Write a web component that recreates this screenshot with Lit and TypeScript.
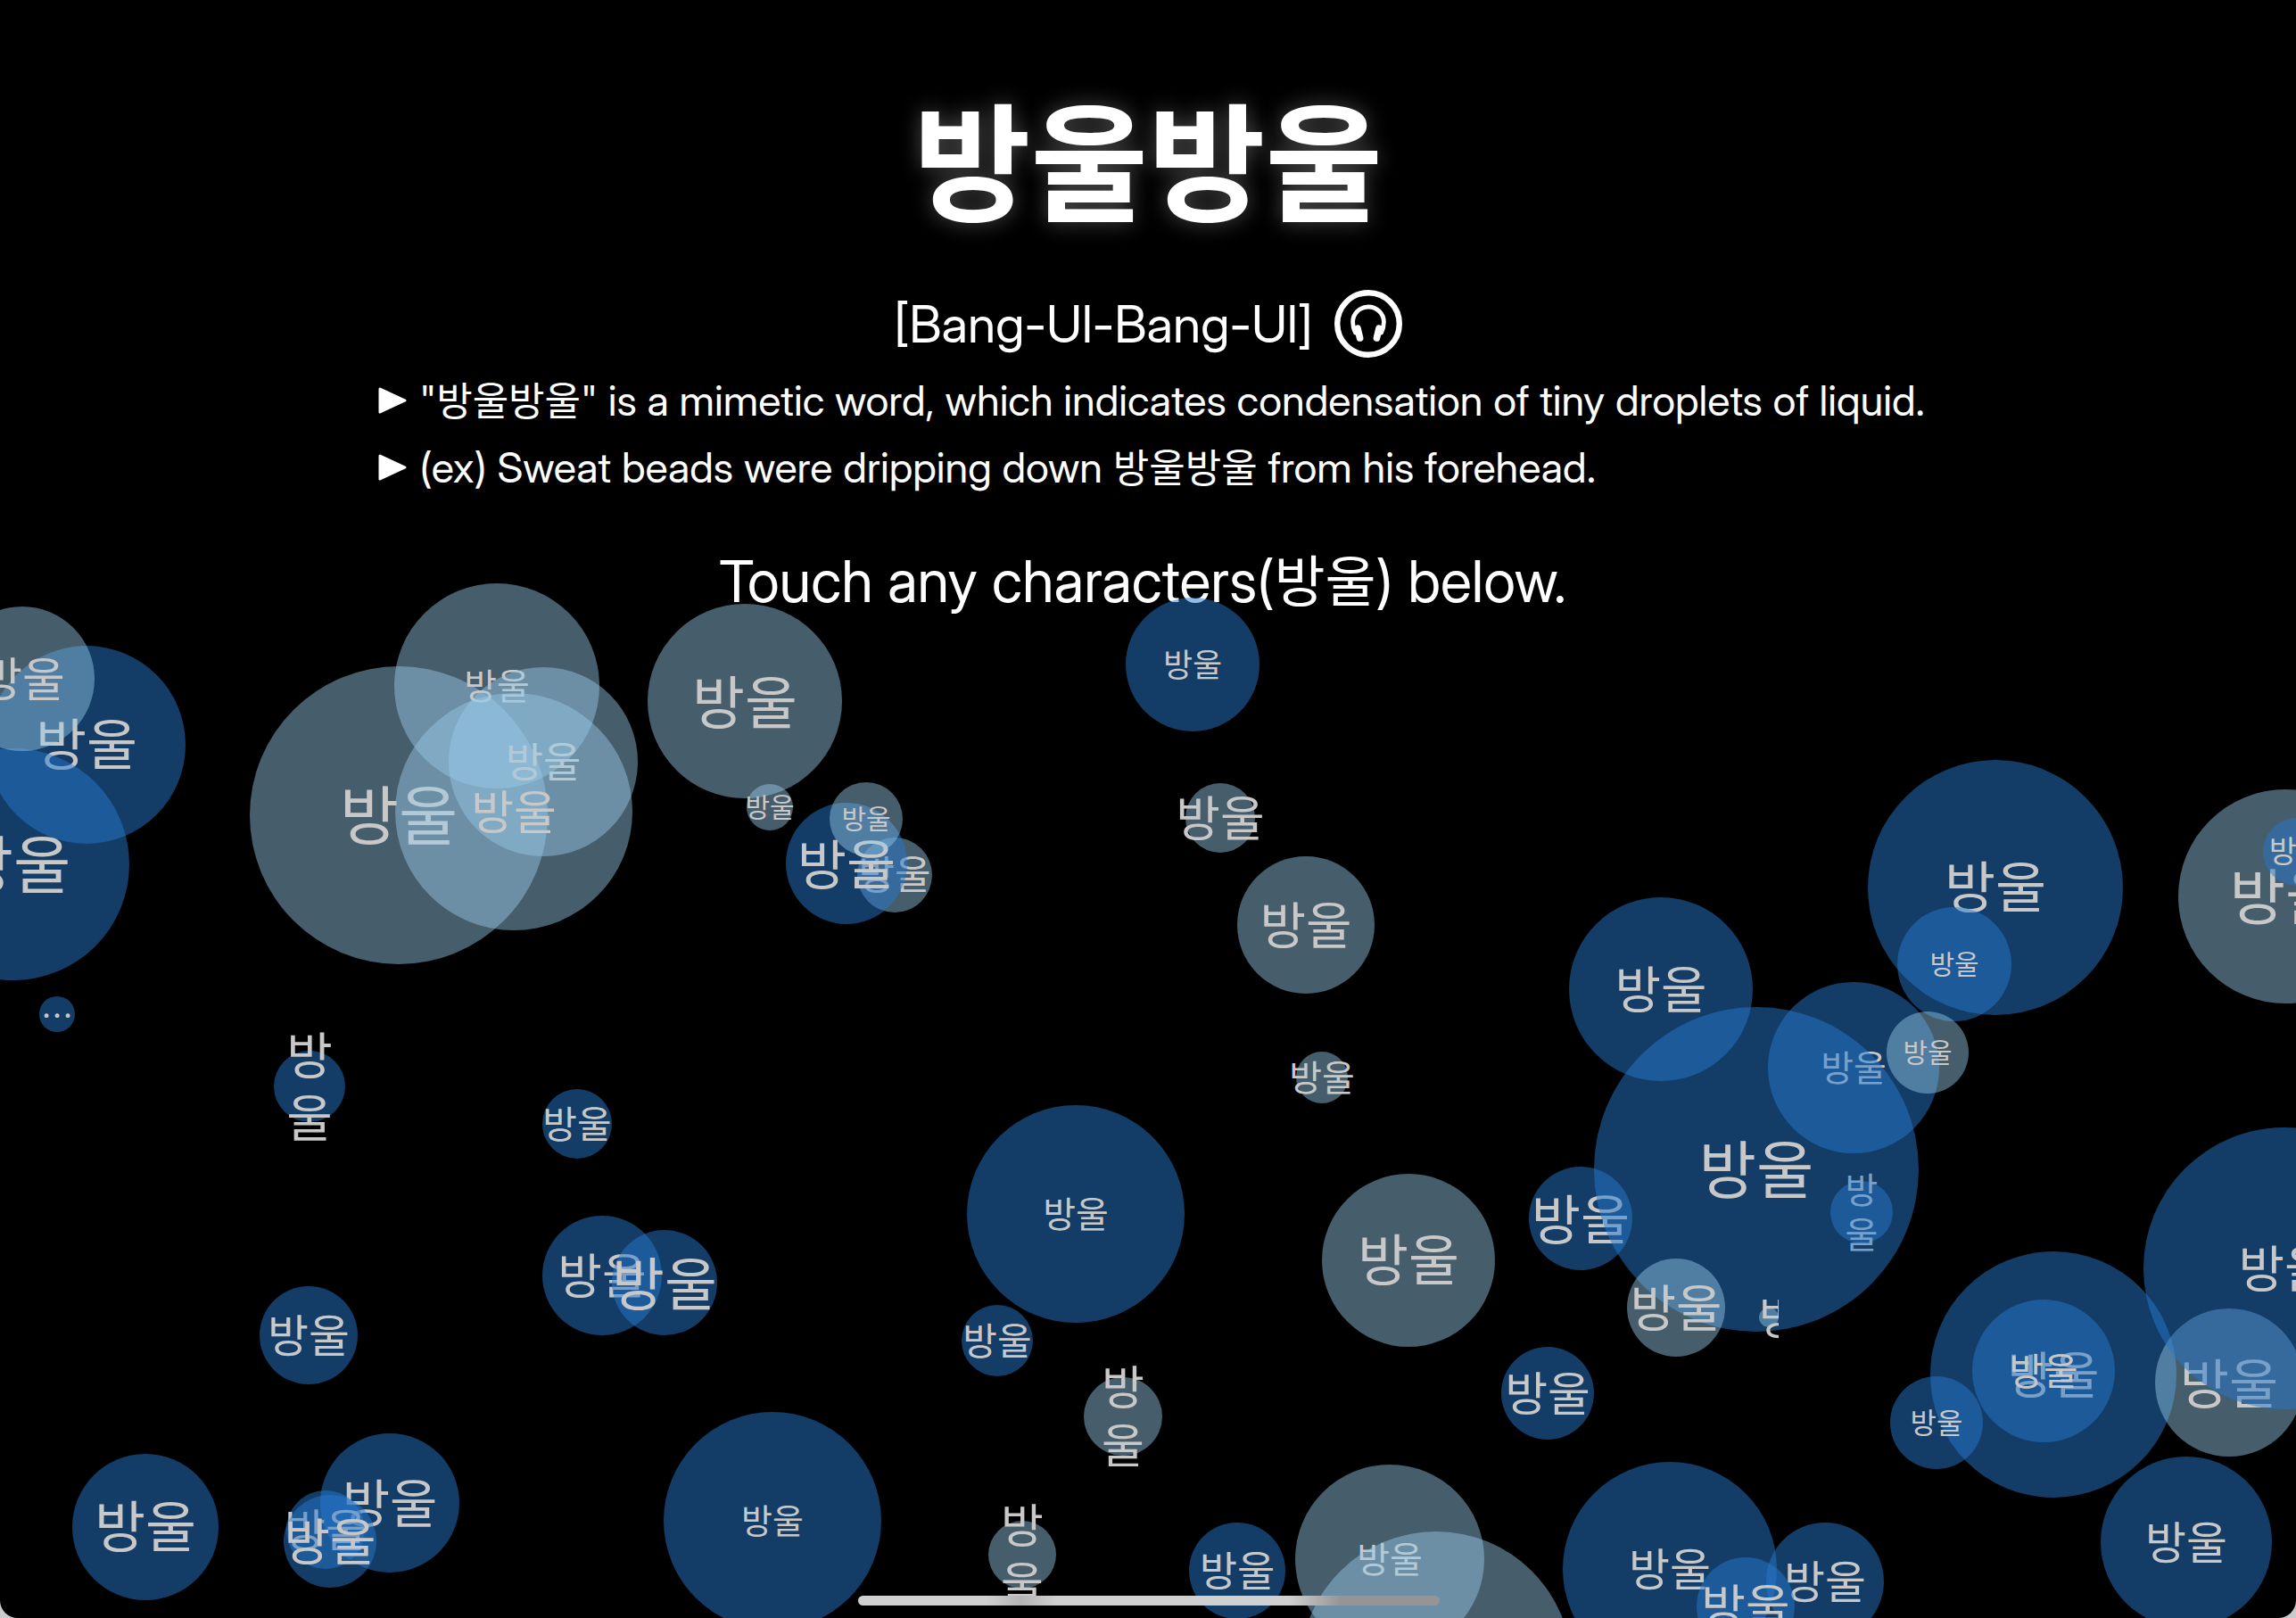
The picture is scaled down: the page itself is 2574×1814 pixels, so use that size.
import { LitElement, css, html } from "lit";
import { customElement, property, state } from "lit/decorators.js";
import { styleMap } from "lit/directives/style-map.js";

type Tone = "deep" | "pale";
type Fit = "line" | "stack" | "clip" | "dots" | "none";

interface Bubble {
  x: number;
  y: number;
  r: number;
  size: number;
  tone: Tone;
  fit: Fit;
}

const deep = (x: number, y: number, r: number, size: number, fit: Fit = "line"): Bubble => ({ x, y, r, size, tone: "deep", fit });
const pale = (x: number, y: number, r: number, size: number, fit: Fit = "line"): Bubble => ({ x, y, r, size, tone: "pale", fit });

// Centre, radius and label size of each droplet, listed from back to front.
const BUBBLES: Bubble[] = [
  deep(97, 835, 111, 62),
  deep(15, 969, 130, 70),
  pale(25, 761, 81, 52),
  pale(447, 914, 167, 72),
  pale(557, 769, 115, 40),
  pale(609, 854, 106, 46),
  pale(576, 910, 133, 52),
  deep(64, 1137, 20, 36, "dots"),
  deep(347, 1218, 40, 56, "stack"),
  deep(647, 1260, 39, 42),
  deep(675, 1430, 67, 54),
  deep(745, 1438, 59, 64),
  deep(346, 1497, 55, 50),
  deep(163, 1712, 82, 62),
  deep(437, 1685, 78, 58),
  deep(365, 1715, 44, 50),
  deep(370, 1728, 52, 56),
  pale(835, 786, 109, 64),
  pale(863, 905, 26, 30),
  pale(1003, 981, 42, 44),
  deep(949, 968, 68, 60),
  pale(971, 918, 41, 30),
  deep(1337, 745, 75, 36),
  pale(1368, 917, 39, 54),
  pale(1464, 1037, 77, 56),
  pale(1482, 1208, 29, 40),
  pale(1579, 1413, 97, 62),
  deep(1772, 1366, 58, 60),
  deep(1862, 1109, 103, 56),
  deep(2078, 1197, 96, 40),
  deep(2087, 1359, 35, 40, "stack"),
  deep(1969, 1311, 182, 70),
  deep(1735, 1562, 52, 52),
  deep(2237, 995, 143, 62),
  deep(2191, 1081, 64, 30),
  pale(2161, 1180, 46, 30),
  pale(2562, 1005, 120, 68),
  deep(2575, 955, 38, 34),
  pale(1879, 1466, 55, 56),
  pale(1983, 1477, 11, 50, "clip"),
  deep(2302, 1541, 138, 56),
  deep(2291, 1537, 80, 42),
  deep(2171, 1595, 52, 32),
  pale(2499, 1550, 83, 60),
  deep(2561, 1422, 158, 56),
  deep(2451, 1729, 96, 50),
  deep(1872, 1759, 120, 50),
  deep(2046, 1773, 66, 50),
  deep(1957, 1801, 55, 54),
  pale(1558, 1748, 106, 40),
  pale(1610, 1869, 152, 40, "none"),
  deep(1387, 1761, 54, 46),
  pale(1146, 1743, 38, 52, "stack"),
  pale(1259, 1588, 44, 52, "stack"),
  deep(1206, 1361, 122, 40),
  deep(1118, 1503, 40, 42),
  deep(866, 1705, 122, 38),
];

@customElement("droplet-bubble")
export class DropletBubble extends LitElement {
  @property({ attribute: false }) bubble!: Bubble;

  static styles = css`
    :host {
      display: block;
    }
    .bubble {
      display: flex;
      align-items: center;
      justify-content: center;
      box-sizing: border-box;
      width: 100%;
      height: 100%;
      padding: 0;
      border: 0;
      border-radius: 50%;
      color: #c8c8c8;
      font-family: "Noto Sans CJK KR", sans-serif;
      font-size: inherit;
      cursor: pointer;
    }
    .deep {
      background: rgba(38, 120, 206, 0.5);
    }
    .pale {
      background: rgba(152, 202, 233, 0.46);
    }
    .label {
      flex: none;
      padding-bottom: 0.1em;
      line-height: 1.25;
      white-space: nowrap;
    }
    .stack {
      width: 1em;
      white-space: normal;
      word-break: break-all;
      text-align: center;
    }
    .clip {
      width: 100%;
      overflow: hidden;
      text-align: left;
    }
    .dots {
      padding-bottom: 0;
    }
  `;

  render() {
    const { tone, fit } = this.bubble;
    const text = fit === "dots" ? "⋯" : fit === "none" ? "" : "방울";
    return html`<button class="bubble ${tone}" type="button" aria-label="방울">
      <span class="label ${fit}">${text}</span>
    </button>`;
  }
}

@customElement("app-root")
export class AppRoot extends LitElement {
  @state() private popped = new Set<number>();

  static styles = css`
    :host {
      display: block;
      background: #c8cacc;
    }
    .screen {
      position: relative;
      box-sizing: border-box;
      min-height: 100vh;
      padding-top: 83px;
      overflow: hidden;
      border-radius: 0 0 20px 20px;
      background: #000;
      color: #fff;
      font-family: "Inter Display", "Inter Tight", Inter, "Noto Sans CJK KR", sans-serif;
    }
    .intro {
      display: flex;
      flex-direction: column;
      align-items: center;
    }
    .title {
      margin: 0 0 58px;
      font-family: "Noto Sans CJK KR", sans-serif;
      font-size: 143px;
      font-weight: 700;
      line-height: 184px;
      text-shadow: 0 0 24px rgba(255, 255, 255, 0.3);
    }
    .reading {
      display: flex;
      align-items: center;
      gap: 24px;
      height: 76px;
      margin-bottom: 10px;
      font-size: 57px;
    }
    .listen {
      display: block;
      width: 76px;
      height: 76px;
      padding: 0;
      border: 0;
      background: none;
      color: inherit;
      cursor: pointer;
    }
    .icon {
      display: block;
      width: 100%;
      height: 100%;
    }
    .notes {
      margin: 0 0 51px;
      padding: 0 0 0 8px;
      list-style: none;
      font-size: 47px;
      line-height: 75px;
    }
    .note {
      display: flex;
      align-items: center;
      gap: 14px;
    }
    .marker {
      flex: none;
      width: 32px;
      height: 30px;
    }
    .ko {
      font-family: "Noto Sans CJK KR", sans-serif;
      font-size: 44px;
      line-height: 1;
    }
    .prompt {
      margin: 0;
      padding-right: 12px;
      font-size: 65px;
      line-height: 80px;
    }
    .prompt .ko {
      font-size: 62px;
    }
    .field {
      position: absolute;
      inset: 0;
    }
    .drop {
      position: absolute;
    }
    .home {
      position: absolute;
      bottom: 14px;
      left: 50%;
      width: 652px;
      height: 11px;
      margin-left: -325px;
      border-radius: 6px;
      background: linear-gradient(90deg, #d0d0d0 0 22%, #b4b4b4 28%, #d0d0d0 34% 74%, #959595 83%);
    }
  `;

  private pop(index: number) {
    this.popped = new Set(this.popped).add(index);
  }

  private speak() {
    const words = new SpeechSynthesisUtterance("방울방울");
    words.lang = "ko-KR";
    window.speechSynthesis?.speak(words);
  }

  private marker() {
    return html`<svg class="marker" viewBox="0 0 32 30" aria-hidden="true">
      <path d="M2 2 L30 15 L2 28 Z" fill="currentColor" stroke="currentColor" stroke-width="3" stroke-linejoin="round" />
    </svg>`;
  }

  render() {
    return html`
      <main class="screen">
        <header class="intro">
          <h1 class="title">방울방울</h1>
          <div class="reading">
            <span>[Bang-Ul-Bang-Ul]</span>
            <button class="listen" type="button" aria-label="Listen" @click=${this.speak}>
              <svg class="icon" viewBox="0 0 76 76" fill="none" stroke="currentColor" stroke-linecap="round">
                <circle cx="38" cy="38" r="34.8" stroke-width="6.4" />
                <path d="M23.4 48 C21.2 43.5 20.6 39.5 20.6 36 A17.4 17 0 0 1 55.4 36 C55.4 39.5 54.8 43.5 52.6 48" stroke-width="4.8" />
                <path d="M26 43.2 L28.6 54" stroke-width="7.6" />
                <path d="M50 43.2 L47.4 54" stroke-width="7.6" />
              </svg>
            </button>
          </div>
          <ul class="notes">
            <li class="note">
              ${this.marker()}
              <span>"<span class="ko">방울방울</span>" is a mimetic word, which indicates condensation of tiny droplets of liquid.</span>
            </li>
            <li class="note">
              ${this.marker()}
              <span>(ex) Sweat beads were dripping down <span class="ko">방울방울</span> from his forehead.</span>
            </li>
          </ul>
          <p class="prompt">Touch any characters(<span class="ko">방울</span>) below.</p>
        </header>
        <section class="field" aria-label="Droplets">
          ${BUBBLES.map((b, i) =>
            this.popped.has(i)
              ? null
              : html`<droplet-bubble
                  class="drop"
                  .bubble=${b}
                  style=${styleMap({
                    left: `${b.x - b.r}px`,
                    top: `${b.y - b.r}px`,
                    width: `${b.r * 2}px`,
                    height: `${b.r * 2}px`,
                    fontSize: `${b.size}px`,
                  })}
                  @click=${() => this.pop(i)}
                ></droplet-bubble>`
          )}
        </section>
        <div class="home"></div>
      </main>
    `;
  }
}
